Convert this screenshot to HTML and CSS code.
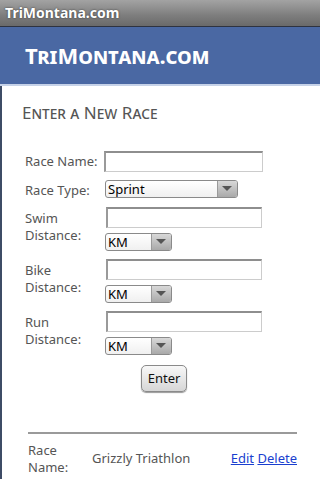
FILE: index.html
```html
<!DOCTYPE html>
<html>
<head>
<meta charset="utf-8">
<link rel="stylesheet" href="styles.css">
</head>
<body>
<div class="titlebar">TriMontana.com</div>
<div class="header"><span class="logo">TriMontana.com</span></div>
<div class="content">
  <h1 class="heading">Enter a New Race</h1>
  <form class="form">
    <div class="row single">
      <label class="lbl">Race Name:</label>
      <div class="fields"><span class="input"></span></div>
    </div>
    <div class="row single">
      <label class="lbl">Race Type:</label>
      <div class="fields"><span class="select wide"><span class="val">Sprint</span><span class="arrow"></span></span></div>
    </div>
    <div class="row">
      <label class="lbl">Swim Distance:</label>
      <div class="fields"><span class="input"></span><span class="select unit"><span class="val">KM</span><span class="arrow"></span></span></div>
    </div>
    <div class="row">
      <label class="lbl">Bike Distance:</label>
      <div class="fields"><span class="input"></span><span class="select unit"><span class="val">KM</span><span class="arrow"></span></span></div>
    </div>
    <div class="row">
      <label class="lbl">Run Distance:</label>
      <div class="fields"><span class="input"></span><span class="select unit"><span class="val">KM</span><span class="arrow"></span></span></div>
    </div>
    <div class="actions"><span class="btn">Enter</span></div>
  </form>
  <div class="list">
    <div class="item">
      <span class="ilbl">Race<br>Name:</span>
      <span class="iname">Grizzly Triathlon</span>
      <span class="links"><a href="#">Edit</a> <a href="#">Delete</a></span>
    </div>
  </div>
</div>
</body>
</html>
```
FILE: styles.css
```css
html, body {
  margin: 0;
  padding: 0;
}
body {
  width: 320px;
  height: 480px;
  overflow: hidden;
  font-family: "Noto Sans", "Open Sans", sans-serif;
  background: #fff;
}
.titlebar {
  height: 27px;
  box-sizing: border-box;
  padding: 3px 0 0 5px;
  background: linear-gradient(#a3a3a3, #7d7d7d 60%, #6a6a6a);
  border-bottom: 1px solid #2e3340;
  color: #fff;
  font-weight: bold;
  font-size: 14px;
  line-height: 20px;
  text-shadow: 0 0 2px #333;
}
.header {
  height: 59px;
  box-sizing: border-box;
  background: #4a68a3;
  border-bottom: 2px solid #c6d2e8;
  padding: 13px 0 0 25px;
}
.logo {
  color: #fff;
  font-weight: bold;
  font-variant: small-caps;
  font-size: 22px;
  line-height: 30px;
}
.content {
  border-left: 2px solid #3e4c66;
  height: 393px;
  box-sizing: border-box;
  padding: 15px 0 0 20px;
}
.heading {
  margin: 0;
  font-weight: normal;
  font-variant: small-caps;
  font-size: 17px;
  line-height: 24px;
  color: #555;
}
.form {
  margin: 26px 0 0 3px;
  display: flex;
  flex-direction: column;
  gap: 8px;
}
.row {
  display: flex;
  align-items: flex-start;
}
.lbl {
  width: 79px;
  flex: none;
  font-size: 13px;
  line-height: 17px;
  color: #555;
  padding-top: 5px;
}
.row.single .lbl {
  padding-top: 2px;
}
.row:not(.single) .lbl {
  padding-top: 3px;
}
.fields {
  display: flex;
  flex-direction: column;
  gap: 5px;
  align-items: flex-start;
}
.input {
  display: block;
  width: 159px;
  height: 21px;
  box-sizing: border-box;
  border: 1px solid #ccc;
  border-top: 2px solid #8e8e8e;
  border-left: 2px solid #9a9a9a;
  background: #fff;
}
.row:not(.single) .input {
  width: 156px;
  margin-left: 2px;
}
.select {
  display: flex;
  height: 18px;
  box-sizing: border-box;
  border: 1px solid #8a8a8a;
  border-radius: 3px;
  background: linear-gradient(#fff, #f0f0f0);
  overflow: hidden;
}
.select.wide {
  width: 133px;
  margin-left: 1px;
}
.select.unit {
  width: 67px;
  margin-left: 1px;
}
.val {
  flex: 1;
  font-size: 13px;
  line-height: 16px;
  padding-left: 2px;
  color: #000;
}
.arrow {
  width: 19px;
  border-left: 1px solid #9a9a9a;
  background: linear-gradient(#d8d8d8, #a9a9a9);
  position: relative;
}
.arrow::after {
  content: "";
  position: absolute;
  left: 4px;
  top: 5px;
  border-left: 5px solid transparent;
  border-right: 5px solid transparent;
  border-top: 5px solid #555;
}
.actions {
  display: flex;
  margin-left: 116px;
  margin-top: 2px;
}
.btn {
  display: block;
  width: 46px;
  height: 27px;
  box-sizing: border-box;
  border: 1px solid #8a8a8a;
  border-radius: 5px;
  background: linear-gradient(#f8f8f8, #d6d6d6);
  box-shadow: 0 1px 1px #999;
  font-size: 13px;
  line-height: 25px;
  text-align: center;
  color: #111;
}
.list {
  margin: 40px 0 0 6px;
  width: 269px;
  border-top: 2px solid #9a9a9a;
}
.item {
  display: flex;
  align-items: center;
  padding-top: 8px;
  font-size: 13px;
  line-height: 16.5px;
  color: #555;
}
.ilbl {
  width: 64px;
  flex: none;
}
.iname {
  flex: 1;
}
.links a {
  color: #1a3fcf;
}
```
